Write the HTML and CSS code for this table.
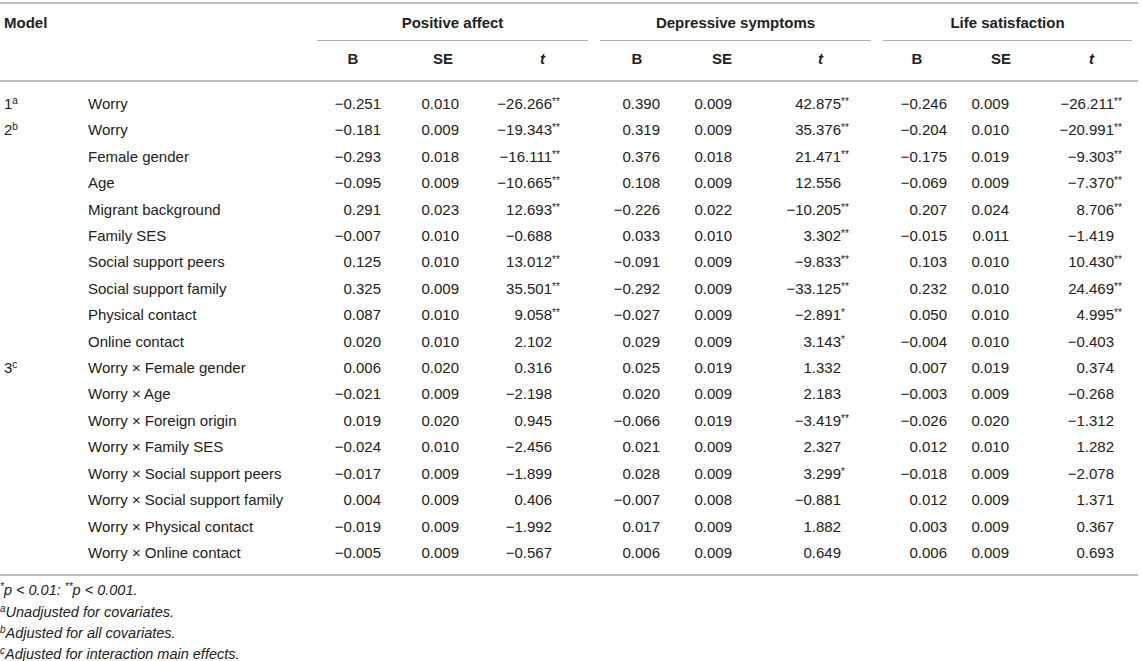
FILE: index.html
```html
<!DOCTYPE html>
<html>

<head>
  <meta charset="UTF-8" />
  <title>Table</title>
  <link rel="stylesheet" href="styles.css">
</head>

<body>
  <table class="results">
    <colgroup>
      <col class="c-model">
      <col class="c-label">
      <col class="c-pb"><col class="c-pse"><col class="c-pt">
      <col class="c-db"><col class="c-dse"><col class="c-dt">
      <col class="c-lb"><col class="c-lse"><col class="c-lt">
    </colgroup>
    <thead>
      <tr class="groups">
        <th class="model">Model</th>
        <th></th>
        <th colspan="3" class="group"><div>Positive affect</div></th>
        <th colspan="3" class="group"><div>Depressive symptoms</div></th>
        <th colspan="3" class="group"><div>Life satisfaction</div></th>
      </tr>
      <tr class="subs">
        <th></th>
        <th></th>
        <th class="pb">B</th><th class="pse">SE</th><th class="pt"><i>t</i></th>
        <th class="db">B</th><th class="dse">SE</th><th class="dt"><i>t</i></th>
        <th class="lb">B</th><th class="lse">SE</th><th class="lt"><i>t</i></th>
      </tr>
    </thead>
    <tbody id="rows"></tbody>
  </table>

  <div class="notes">
    <p><sup>*</sup>p &lt; 0.01: <sup>**</sup>p &lt; 0.001.</p>
    <p><sup>a</sup>Unadjusted for covariates.</p>
    <p><sup>b</sup>Adjusted for all covariates.</p>
    <p><sup>c</sup>Adjusted for interaction main effects.</p>
  </div>
</body>

<script>
  // model, label, then B / SE / t for each outcome
  const data = [
    ['1', 'a', 'Worry', '−0.251', '0.010', '−26.266**', '0.390', '0.009', '42.875**', '−0.246', '0.009', '−26.211**'],
    ['2', 'b', 'Worry', '−0.181', '0.009', '−19.343**', '0.319', '0.009', '35.376**', '−0.204', '0.010', '−20.991**'],
    ['', '', 'Female gender', '−0.293', '0.018', '−16.111**', '0.376', '0.018', '21.471**', '−0.175', '0.019', '−9.303**'],
    ['', '', 'Age', '−0.095', '0.009', '−10.665**', '0.108', '0.009', '12.556', '−0.069', '0.009', '−7.370**'],
    ['', '', 'Migrant background', '0.291', '0.023', '12.693**', '−0.226', '0.022', '−10.205**', '0.207', '0.024', '8.706**'],
    ['', '', 'Family SES', '−0.007', '0.010', '−0.688', '0.033', '0.010', '3.302**', '−0.015', '0.011', '−1.419'],
    ['', '', 'Social support peers', '0.125', '0.010', '13.012**', '−0.091', '0.009', '−9.833**', '0.103', '0.010', '10.430**'],
    ['', '', 'Social support family', '0.325', '0.009', '35.501**', '−0.292', '0.009', '−33.125**', '0.232', '0.010', '24.469**'],
    ['', '', 'Physical contact', '0.087', '0.010', '9.058**', '−0.027', '0.009', '−2.891*', '0.050', '0.010', '4.995**'],
    ['', '', 'Online contact', '0.020', '0.010', '2.102', '0.029', '0.009', '3.143*', '−0.004', '0.010', '−0.403'],
    ['3', 'c', 'Worry × Female gender', '0.006', '0.020', '0.316', '0.025', '0.019', '1.332', '0.007', '0.019', '0.374'],
    ['', '', 'Worry × Age', '−0.021', '0.009', '−2.198', '0.020', '0.009', '2.183', '−0.003', '0.009', '−0.268'],
    ['', '', 'Worry × Foreign origin', '0.019', '0.020', '0.945', '−0.066', '0.019', '−3.419**', '−0.026', '0.020', '−1.312'],
    ['', '', 'Worry × Family SES', '−0.024', '0.010', '−2.456', '0.021', '0.009', '2.327', '0.012', '0.010', '1.282'],
    ['', '', 'Worry × Social support peers', '−0.017', '0.009', '−1.899', '0.028', '0.009', '3.299*', '−0.018', '0.009', '−2.078'],
    ['', '', 'Worry × Social support family', '0.004', '0.009', '0.406', '−0.007', '0.008', '−0.881', '0.012', '0.009', '1.371'],
    ['', '', 'Worry × Physical contact', '−0.019', '0.009', '−1.992', '0.017', '0.009', '1.882', '0.003', '0.009', '0.367'],
    ['', '', 'Worry × Online contact', '−0.005', '0.009', '−0.567', '0.006', '0.009', '0.649', '0.006', '0.009', '0.693']
  ]
  const cls = ['pb', 'pse', 'pt', 'db', 'dse', 'dt', 'lb', 'lse', 'lt']

  const cell = (v, i) => {
    const m = v.match(/^(.*?)(\**)$/)
    const stars = m[2] ? `<span class="sig">${m[2]}</span>` : ''
    return `<td class="num ${cls[i]}">${m[1]}${stars}</td>`
  }

  document.getElementById('rows').innerHTML = data
    .map(r => {
      const model = r[0] ? `${r[0]}<sup>${r[1]}</sup>` : ''
      return `<tr><td class="model">${model}</td><td class="label">${r[2]}</td>${r
        .slice(3)
        .map(cell)
        .join('')}</tr>`
    })
    .join('')
</script>

</html>
```

FILE: styles.css
```css
* {
  margin: 0;
  padding: 0;
}

body {
  background-color: #fff;
  color: #222;
  font-family: "Liberation Sans", Arial, sans-serif;
  font-size: 15px;
}

.results {
  width: 1138px;
  border-collapse: collapse;
  table-layout: fixed;
  border-top: 2px solid #bdbdbd;
  border-bottom: 2px solid #bdbdbd;
  margin-top: 2px;
}

.c-model { width: 84px; }
.c-label { width: 227px; }
.c-pb { width: 84px; }
.c-pse { width: 96px; }
.c-pt { width: 103px; }
.c-db { width: 86px; }
.c-dse { width: 84px; }
.c-dt { width: 113px; }
.c-lb { width: 80px; }
.c-lse { width: 88px; }
.c-lt { width: 93px; }

th {
  font-weight: bold;
  line-height: 16px;
  text-align: center;
  white-space: nowrap;
}

.groups th {
  padding-top: 11px;
  vertical-align: top;
}

.groups th.model {
  text-align: left;
  padding-left: 4px;
}

.group {
  padding: 0 6px;
}

.group div {
  padding-bottom: 9px;
  border-bottom: 1px solid #b3b3b3;
}

.subs th {
  padding: 10px 0 13px;
  border-bottom: 2px solid #bdbdbd;
}

td {
  padding: 5px 0;
  line-height: 16.4px;
  white-space: nowrap;
}

tbody tr:first-child td {
  padding-top: 14px;
}

tbody tr:last-child td {
  padding-bottom: 13px;
}

td.model,
td.label {
  padding-left: 4px;
}

sup {
  font-size: 10px;
  line-height: 0;
  vertical-align: 5px;
}

.num {
  text-align: right;
}

.sig {
  display: inline-block;
  width: 0;
  font-size: 10px;
  line-height: 0;
  vertical-align: 4px;
}

td.pb { padding-right: 14px; }
td.pse { padding-right: 32px; }
td.pt { padding-right: 42px; }
td.db { padding-right: 20px; }
td.dse { padding-right: 32px; }
td.dt { padding-right: 36px; }
td.lb { padding-right: 10px; }
td.lse { padding-right: 36px; }
td.lt { padding-right: 24px; }

.notes {
  padding-top: 4px;
  font-style: italic;
  font-size: 14.5px;
  line-height: 21.3px;
}

.notes sup {
  font-size: 10px;
  vertical-align: 5px;
}
```
